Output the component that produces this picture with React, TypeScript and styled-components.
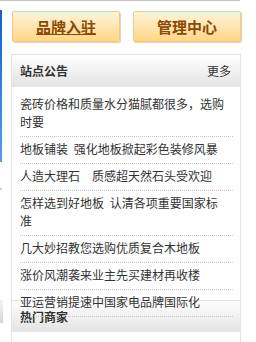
import styled, { createGlobalStyle } from 'styled-components';
import { FC } from 'react';

const GlobalStyle = createGlobalStyle`
  body {
    margin: 0;
    background: #fff;
    font-family: "Noto Sans CJK SC", "Noto Sans", sans-serif;
    color: #333;
  }
`;

const TopLine = styled.div`
  width: 240px;
  height: 1px;
  background: #c4c4c4;
`;

const Layout = styled.div`
  display: flex;
`;

const Strip = styled.div`
  width: 2px;
  display: flex;
  flex-direction: column;
`;

const BlueBar = styled.div`
  margin-top: 9px;
  height: 152px;
  background: linear-gradient(#1d5cbd, #5d9ce2);
`;

const GrayDash = styled.div`
  margin-top: 26px;
  height: 2px;
  background: #cfcfcf;
`;

const GrayBlock = styled.div`
  margin-top: 110px;
  width: 3px;
  height: 23px;
  background: linear-gradient(#f3f3f3, #d6d6d6);
`;

const Main = styled.div`
  margin-left: 9px;
  width: 230px;
`;

const ButtonRow = styled.div`
  display: flex;
  gap: 13px;
  margin: 10px 0 0 1px;
`;

const BigButton = styled.a<{ $underline?: boolean }>`
  box-sizing: border-box;
  width: 108px;
  height: 31px;
  display: flex;
  align-items: center;
  justify-content: center;
  border: 1px solid #f4c97c;
  border-radius: 2px;
  background: linear-gradient(#fff4d9, #ffd686);
  box-shadow: 1px 1px 1px rgba(0, 0, 0, 0.18);
  color: #8a4a05;
  font-size: 15px;
  font-weight: bold;
  text-decoration: ${p => (p.$underline ? 'underline' : 'none')};
  cursor: pointer;
`;

const Panel = styled.div<{ $height?: number }>`
  box-sizing: border-box;
  width: 230px;
  border: 1px solid #e3e3e3;
  ${p => (p.$height ? `height: ${p.$height}px;` : '')}
`;

const Notice = styled(Panel)`
  margin-top: 12px;
`;

const Business = styled(Panel)`
  border-top: none;
  border-bottom: none;
  min-height: 41px;
`;

const PanelHead = styled.div<{ $h: number }>`
  height: ${p => p.$h}px;
  display: flex;
  align-items: center;
  justify-content: space-between;
  padding: 0 9px 0 8px;
  background: linear-gradient(#fefefe, #e4e4e4);
  border-bottom: 1px solid #e6e6e6;
`;

const PanelTitle = styled.span`
  font-size: 12px;
  font-weight: bold;
  color: #333;
`;

const More = styled.a`
  font-size: 12px;
  color: #333;
`;

const List = styled.ul`
  list-style: none;
  margin: 0;
  padding: 5px 7px 0 8px;
`;

// relative so the last row's text and dots stay above the next panel's header
const Item = styled.li`
  position: relative;
  padding: 3px 4px 5px 0;
  border-bottom: 1px dotted #c8c8c8;
  font-size: 12px;
  line-height: 18px;
  word-spacing: 3px;
  color: #333;
`;

const news = [
  '瓷砖价格和质量水分猫腻都很多，选购时要',
  '地板铺装 强化地板掀起彩色装修风暴',
  '人造大理石\u3000质感超天然石头受欢迎',
  '怎样选到好地板 认清各项重要国家标准',
  '几大妙招教您选购优质复合木地板',
  '涨价风潮袭来业主先买建材再收楼',
  '亚运营销提速中国家电品牌国际化'
];

const App: FC = () => (
  <>
    <GlobalStyle />
    <TopLine />
    <Layout>
      <Strip>
        <BlueBar />
        <GrayDash />
        <GrayBlock />
      </Strip>
      <Main>
        <ButtonRow>
          <BigButton $underline>品牌入驻</BigButton>
          <BigButton>管理中心</BigButton>
        </ButtonRow>
        <Notice $height={247}>
          <PanelHead $h={31}>
            <PanelTitle>站点公告</PanelTitle>
            <More>更多</More>
          </PanelHead>
          <List>
            {news.map(text => (
              <Item key={text}>{text}</Item>
            ))}
          </List>
        </Notice>
        <Business>
          <PanelHead $h={30}>
            <PanelTitle>热门商家</PanelTitle>
          </PanelHead>
        </Business>
      </Main>
    </Layout>
  </>
);

export default App;
